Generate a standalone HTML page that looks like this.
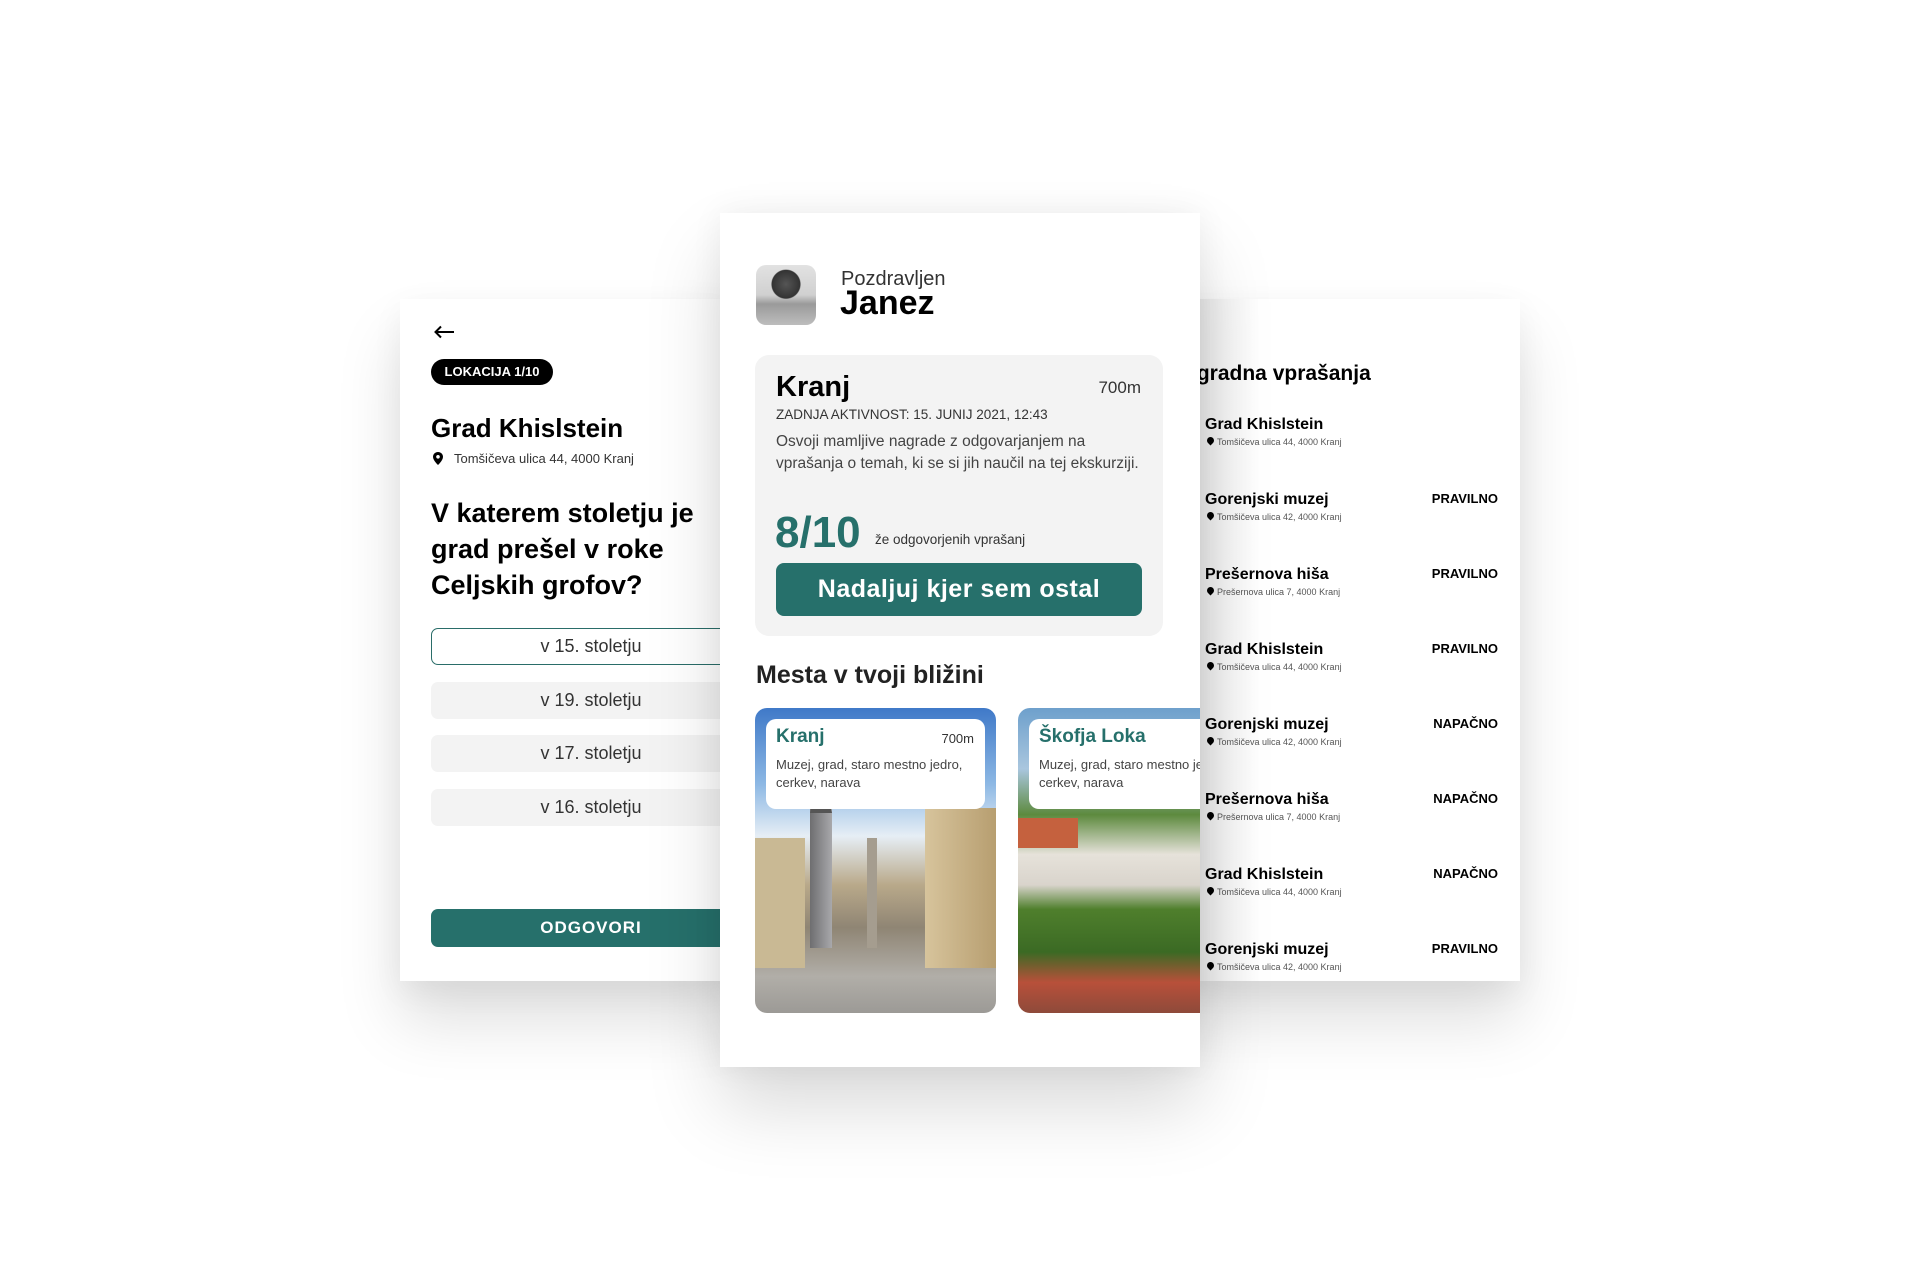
<!DOCTYPE html>
<html><head><meta charset="utf-8"><style>
*{margin:0;padding:0;box-sizing:border-box}
body{width:1920px;height:1280px;background:#fff;position:relative;overflow:hidden;font-family:"Liberation Sans",sans-serif;color:#000}
.abs{position:absolute}
.panel{position:absolute;background:#fff}
.sh{box-shadow:0 40px 60px rgba(0,0,0,0.13),0 10px 30px rgba(0,0,0,0.05)}
.b{font-weight:bold}
.opt{position:absolute;left:31px;width:320px;height:37px;background:#f3f3f3;border-radius:7px;font-size:18px;color:#333;text-align:center;line-height:37px;padding-right:0}
.item .n{position:absolute;font-size:16px;font-weight:bold;left:0;top:0;white-space:nowrap}
.item .a{position:absolute;font-size:9px;color:#555;left:12px;top:21px;white-space:nowrap}
.item .pin{position:absolute;left:2px;top:21px;width:7px;height:7px;background:#000;border-radius:50% 50% 50% 0;transform:rotate(-45deg)}
.item .s{position:absolute;font-size:13px;font-weight:bold;right:0;top:0;left:auto}
</style></head><body>

<!-- left panel -->
<div class="panel sh" style="left:400px;top:299px;width:340px;height:682px">
  <svg class="abs" style="left:33px;top:26px" width="22" height="14" viewBox="0 0 22 14"><path d="M21 7H3M8 1.5L2.5 7L8 12.5" stroke="#000" stroke-width="2" fill="none"/></svg>
  <div class="abs b" style="left:31px;top:60px;width:122px;height:26px;background:#000;color:#fff;border-radius:13px;font-size:13px;line-height:26px;text-align:center">LOKACIJA 1/10</div>
  <div class="abs b" style="left:31px;top:114px;font-size:26px">Grad Khislstein</div>
  <svg class="abs" style="left:33px;top:153px" width="10" height="13" viewBox="0 0 10 13"><path d="M5 0C2.2 0 0 2.2 0 4.9C0 8.5 5 13 5 13S10 8.5 10 4.9C10 2.2 7.8 0 5 0Z" fill="#000"/><circle cx="5" cy="4.8" r="1.8" fill="#fff"/></svg>
  <div class="abs" style="left:54px;top:152px;font-size:13px;color:#333">Tomšičeva ulica 44, 4000 Kranj</div>
  <div class="abs b" style="left:31px;top:196px;font-size:27px;line-height:36px;width:320px">V katerem stoletju je grad prešel v roke Celjskih grofov?</div>
  <div class="opt" style="top:329px;background:#fff;border:1.5px solid #2a6d69;line-height:34px">v 15. stoletju</div>
  <div class="opt" style="top:383px">v 19. stoletju</div>
  <div class="opt" style="top:436px">v 17. stoletju</div>
  <div class="opt" style="top:490px">v 16. stoletju</div>
  <div class="abs b" style="left:31px;top:610px;width:320px;height:38px;background:#26706b;border-radius:7px;color:#fff;font-size:17px;line-height:38px;text-align:center;letter-spacing:1px">ODGOVORI</div>
</div>

<!-- right panel -->
<div class="panel sh" style="left:1160px;top:299px;width:360px;height:682px;overflow:hidden">
  <div class="abs" style="left:40px;top:0;width:60px;height:682px;background:linear-gradient(90deg,rgba(0,0,0,0.08),rgba(0,0,0,0))"></div>
  <div class="abs b" style="left:10px;top:63px;font-size:21px;white-space:nowrap">Nagradna vprašanja</div>
  <div class="abs item" style="left:45px;top:117px;width:293px;height:30px"><div class="n">Grad Khislstein</div><div class="pin"></div><div class="a">Tomšičeva ulica 44, 4000 Kranj</div></div>
  <div class="abs item" style="left:45px;top:192px;width:293px;height:30px"><div class="n">Gorenjski muzej</div><div class="pin"></div><div class="a">Tomšičeva ulica 42, 4000 Kranj</div><div class="s">PRAVILNO</div></div>
  <div class="abs item" style="left:45px;top:267px;width:293px;height:30px"><div class="n">Prešernova hiša</div><div class="pin"></div><div class="a">Prešernova ulica 7, 4000 Kranj</div><div class="s">PRAVILNO</div></div>
  <div class="abs item" style="left:45px;top:342px;width:293px;height:30px"><div class="n">Grad Khislstein</div><div class="pin"></div><div class="a">Tomšičeva ulica 44, 4000 Kranj</div><div class="s">PRAVILNO</div></div>
  <div class="abs item" style="left:45px;top:417px;width:293px;height:30px"><div class="n">Gorenjski muzej</div><div class="pin"></div><div class="a">Tomšičeva ulica 42, 4000 Kranj</div><div class="s">NAPAČNO</div></div>
  <div class="abs item" style="left:45px;top:492px;width:293px;height:30px"><div class="n">Prešernova hiša</div><div class="pin"></div><div class="a">Prešernova ulica 7, 4000 Kranj</div><div class="s">NAPAČNO</div></div>
  <div class="abs item" style="left:45px;top:567px;width:293px;height:30px"><div class="n">Grad Khislstein</div><div class="pin"></div><div class="a">Tomšičeva ulica 44, 4000 Kranj</div><div class="s">NAPAČNO</div></div>
  <div class="abs item" style="left:45px;top:642px;width:293px;height:30px"><div class="n">Gorenjski muzej</div><div class="pin"></div><div class="a">Tomšičeva ulica 42, 4000 Kranj</div><div class="s">PRAVILNO</div></div>
</div>

<!-- center panel -->
<div class="panel sh" style="left:720px;top:213px;width:480px;height:854px;overflow:hidden;box-shadow:0 40px 70px rgba(0,0,0,0.15),0 0 30px rgba(0,0,0,0.06)">
  <div class="abs" style="left:36px;top:52px;width:60px;height:60px;border-radius:10px;background:radial-gradient(circle at 50% 32%,#555 0,#333 14px,transparent 15px),linear-gradient(180deg,#e2e2e2 0,#d0d0d0 50%,#9a9a9a 65%,#bdbdbd 100%)"></div>
  <div class="abs" style="left:121px;top:55px;font-size:20px;color:#333">Pozdravljen</div>
  <div class="abs b" style="left:120px;top:71px;font-size:34px">Janez</div>

  <div class="abs" style="left:35px;top:142px;width:408px;height:281px;background:#f3f3f3;border-radius:14px">
    <div class="abs b" style="left:21px;top:16px;font-size:29px">Kranj</div>
    <div class="abs" style="right:22px;top:23px;font-size:17px;color:#333">700m</div>
    <div class="abs" style="left:21px;top:52px;font-size:13.5px;color:#333">ZADNJA AKTIVNOST: 15. JUNIJ 2021, 12:43</div>
    <div class="abs" style="left:21px;top:76px;font-size:15.5px;line-height:22px;color:#444;width:365px">Osvoji mamljive nagrade z odgovarjanjem na vprašanja o temah, ki se si jih naučil na tej ekskurziji.</div>
    <div class="abs b" style="left:20px;top:153px;font-size:44px;color:#26706b">8/10</div>
    <div class="abs" style="left:120px;top:177px;font-size:13.5px;color:#333">že odgovorjenih vprašanj</div>
    <div class="abs b" style="left:21px;top:208px;width:366px;height:53px;background:#26706b;border-radius:8px;color:#fff;font-size:25px;line-height:53px;text-align:center;letter-spacing:0.5px">Nadaljuj kjer sem ostal</div>
  </div>

  <div class="abs" style="left:36px;top:448px;font-size:25px;font-weight:bold;color:#222">Mesta v tvoji bližini</div>

  <div class="abs" style="left:35px;top:495px;width:241px;height:305px;border-radius:12px;overflow:hidden;background:linear-gradient(180deg,#3f79c8 0,#8db8e4 25%,#e6eef5 42%,#b9a98a 58%,#8f8574 72%,#b1aea8 88%,#9c9a96 100%)">
    <div class="abs" style="left:55px;top:100px;width:22px;height:140px;background:linear-gradient(90deg,#6e6e70,#a8a8ab)"></div>
    <div class="abs" style="left:55px;top:60px;width:0;height:0;border-left:11px solid transparent;border-right:11px solid transparent;border-bottom:45px solid #555"></div>
    <div class="abs" style="left:0;top:130px;width:50px;height:130px;background:#c9b994"></div>
    <div class="abs" style="left:170px;top:100px;width:71px;height:160px;background:linear-gradient(90deg,#d7c49c,#b79e70)"></div>
    <div class="abs" style="left:112px;top:130px;width:10px;height:110px;background:#a59d8f"></div>
    <div class="abs" style="left:11px;top:11px;width:219px;height:90px;background:#fff;border-radius:10px">
      <div class="abs b" style="left:10px;top:7px;font-size:19px;color:#26706b">Kranj</div>
      <div class="abs" style="right:11px;top:12px;font-size:13px;color:#333">700m</div>
      <div class="abs" style="left:10px;top:37px;font-size:13px;line-height:18px;color:#444;width:205px">Muzej, grad, staro mestno jedro, cerkev, narava</div>
    </div>
  </div>

  <div class="abs" style="left:298px;top:495px;width:241px;height:305px;border-radius:12px;overflow:hidden;background:linear-gradient(180deg,#6ea0cc 0,#a9c6de 20%,#5d8a3e 35%,#e6e2da 48%,#d9d4cc 58%,#4f7f2c 66%,#3b6a24 80%,#b8503a 90%,#8e4a3a 100%)">
    <div class="abs" style="left:0;top:110px;width:60px;height:30px;background:#c5613e"></div>
    <div class="abs" style="left:11px;top:11px;width:230px;height:90px;background:#fff;border-radius:10px">
      <div class="abs b" style="left:10px;top:7px;font-size:19px;color:#26706b">Škofja Loka</div>
      <div class="abs" style="left:10px;top:37px;font-size:13px;line-height:18px;color:#444;width:230px">Muzej, grad, staro mestno jedro, cerkev, narava</div>
    </div>
  </div>
</div>
</body></html>
